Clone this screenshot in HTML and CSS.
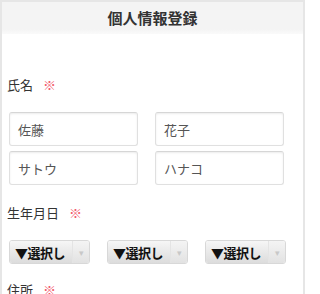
FILE: index.html
```html
<!DOCTYPE html>
<html lang="ja">
<head>
<meta charset="utf-8">
<link rel="stylesheet" href="styles.css">
</head>
<body>
<div class="page">
  <header class="bar"><h1 class="title">個人情報登録</h1></header>
  <main class="form">
    <div class="label label-first">氏名<span class="req">※</span></div>
    <div class="grid2">
      <div class="field">佐藤</div>
      <div class="field">花子</div>
      <div class="field">サトウ</div>
      <div class="field">ハナコ</div>
    </div>
    <div class="label label-mid">生年月日<span class="req">※</span></div>
    <div class="selects">
      <div class="select"><span class="sel-text">▼選択し</span><span class="sel-btn">▾</span></div>
      <div class="select"><span class="sel-text">▼選択し</span><span class="sel-btn">▾</span></div>
      <div class="select"><span class="sel-text">▼選択し</span><span class="sel-btn">▾</span></div>
    </div>
    <div class="label label-last">住所<span class="req">※</span></div>
  </main>
</div>
</body>
</html>
```
FILE: styles.css
```css
* { box-sizing: border-box; }
html, body { margin: 0; padding: 0; background: #fff; }
body {
  width: 305px;
  height: 294px;
  overflow: hidden;
  font-family: "Noto Sans CJK JP", "Noto Sans", sans-serif;
  color: #333;
}
.page {
  border: 2px solid #e6e6e6;
  border-bottom: none;
  height: 300px;
}
.bar {
  height: 32px;
  background: linear-gradient(#f4f4f4 0, #f4f4f4 85%, #fafafa 100%);
  display: flex;
  align-items: center;
  justify-content: center;
}
.title {
  margin: 0;
  font-size: 15px;
  font-weight: bold;
  color: #333;
  line-height: 18px;
}
.form { padding: 0 0 0 5px; }
.label {
  font-size: 13px;
  line-height: 18px;
  color: #333;
}
.label-first { margin-top: 42px; }
.label-mid { margin-top: 19px; }
.label-last { margin-top: 17px; }
.req {
  color: #f25a6a;
  margin-left: 10px;
  font-size: 13px;
}
.grid2 {
  margin-top: 18px;
  margin-left: 2px;
  display: grid;
  grid-template-columns: 129px 129px;
  column-gap: 17px;
  row-gap: 5px;
}
.field {
  height: 34px;
  border: 1px solid #e0e0e0;
  border-top-color: #d6d6d6;
  border-radius: 3px;
  box-shadow: inset 0 1px 2px rgba(0,0,0,0.08);
  padding-left: 8px;
  display: flex;
  align-items: center;
  font-size: 13px;
  color: #555;
}
.selects {
  margin-top: 18px;
  margin-left: 2px;
  display: flex;
  gap: 17px;
}
.select {
  width: 81px;
  height: 24px;
  border: 1px solid #d8d8d8;
  border-radius: 3px;
  display: flex;
  overflow: hidden;
}
.sel-text {
  width: 62px;
  background: linear-gradient(#f6f6f6, #dcdcdc);
  font-size: 13px;
  font-weight: bold;
  color: #111;
  display: flex;
  align-items: center;
  padding-left: 5px;
  white-space: nowrap;
  letter-spacing: -0.5px;
}
.sel-btn {
  flex: 1;
  border-left: 1px solid #e4e4e4;
  background: linear-gradient(#f4f4f4, #e2e2e2);
  color: #c8c8c8;
  font-size: 9px;
  display: flex;
  align-items: center;
  justify-content: center;
}
```
